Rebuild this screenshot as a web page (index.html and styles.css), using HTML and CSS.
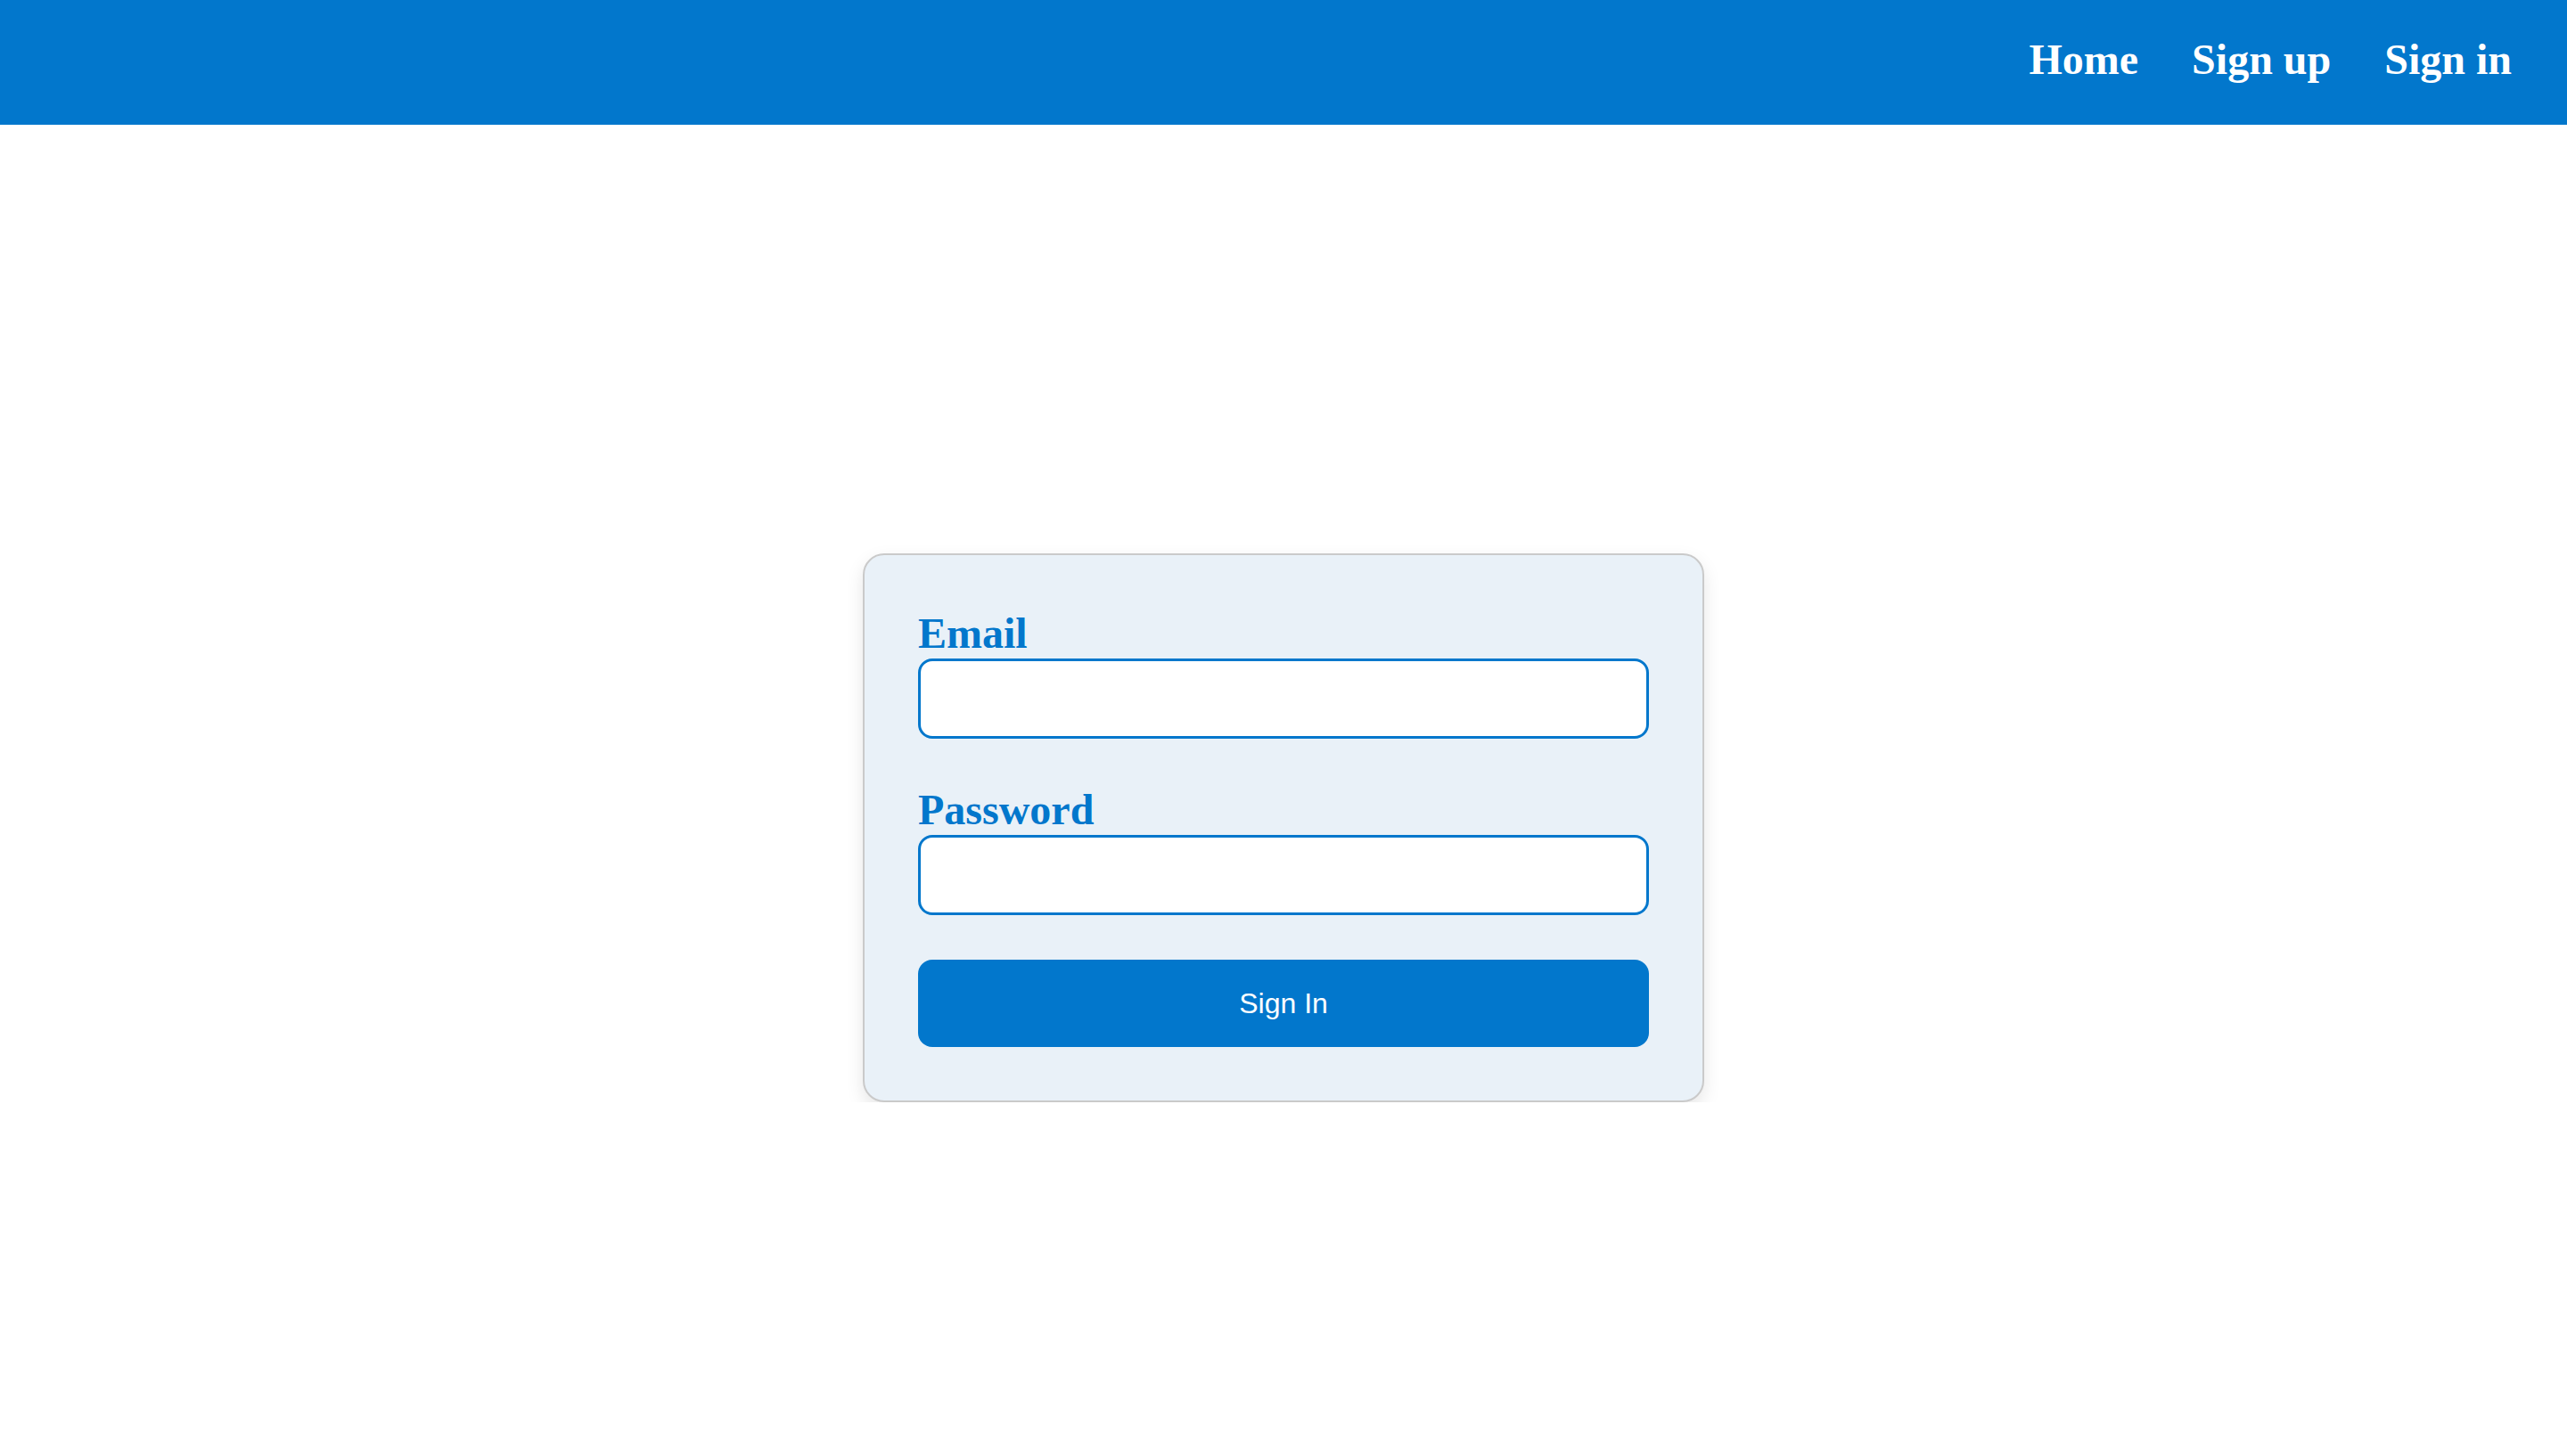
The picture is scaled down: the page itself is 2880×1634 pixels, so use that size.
FILE: index.html
```html
<!DOCTYPE html>
<html lang="en">
<head>
<meta charset="utf-8">
<title>Sign In</title>
<link rel="stylesheet" href="styles.css">
</head>
<body>
<nav class="navbar">
  <a class="nav-link" href="#">Home</a>
  <a class="nav-link" href="#">Sign up</a>
  <a class="nav-link" href="#">Sign in</a>
</nav>
<main class="main">
  <form class="card">
    <label class="label" for="email">Email</label>
    <input class="input" id="email" type="email">
    <label class="label label-gap" for="password">Password</label>
    <input class="input" id="password" type="password">
    <button class="button" type="button">Sign In</button>
  </form>
</main>
</body>
</html>
```

FILE: styles.css
```css
* { box-sizing: border-box; }
html, body { margin: 0; padding: 0; }
body {
  background: #ffffff;
  font-family: "Liberation Serif", "Times New Roman", serif;
}
.navbar {
  height: 140px;
  background: #0277cc;
  display: flex;
  justify-content: flex-end;
  align-items: center;
  gap: 60px;
  padding: 0 62px 6px 0;
}
.nav-link {
  color: #ffffff;
  text-decoration: none;
  font-weight: bold;
  font-size: 48px;
  line-height: 56px;
}
.main {
  display: flex;
  justify-content: center;
  padding-top: 481px;
}
.card {
  width: 944px;
  background: #e9f1f8;
  border: 2px solid #cacaca;
  border-radius: 24px;
  padding: 60px;
  display: flex;
  flex-direction: column;
  box-shadow: 0 8px 20px rgba(0, 0, 0, 0.1);
}
.label {
  display: block;
  color: #0277cc;
  font-weight: bold;
  font-size: 48px;
  line-height: 56px;
}
.label-gap { margin-top: 52px; }
.input {
  height: 90px;
  width: 100%;
  border: 3px solid #0277cc;
  border-radius: 16px;
  background: #ffffff;
  outline: none;
  margin: 0;
  padding: 0 20px;
  font-size: 32px;
}
.button {
  margin-top: 50px;
  height: 98px;
  width: 100%;
  border: none;
  border-radius: 16px;
  background: #0277cc;
  color: #ffffff;
  font-family: "Liberation Sans", Arial, sans-serif;
  font-size: 32px;
  cursor: pointer;
}
```
